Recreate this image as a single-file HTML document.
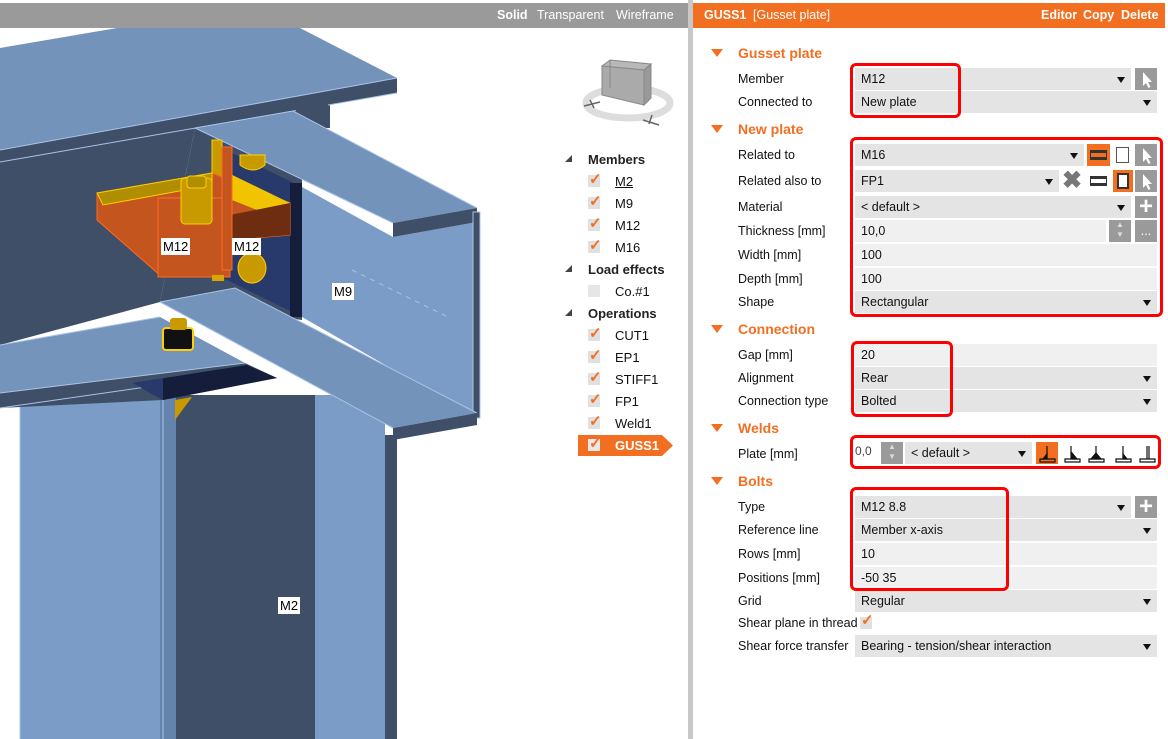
<!DOCTYPE html>
<html><head><meta charset="utf-8"><style>
*{margin:0;padding:0;box-sizing:border-box}
body{width:1168px;height:739px;overflow:hidden;background:#fff;font-family:"Liberation Sans",sans-serif;font-size:12.5px;color:#111;position:relative}
.a{position:absolute}
.lbl{position:absolute;left:738px;font-size:12.5px;line-height:16px}
.sec{position:absolute;left:738px;font-size:14px;font-weight:bold;color:#f26f21;line-height:16px}
.tri{position:absolute;left:711px;width:0;height:0;border-left:6px solid transparent;border-right:6px solid transparent;border-top:8px solid #f26f21}
.f{position:absolute;height:22px;background:#e4e4e4;padding-left:6px;line-height:22px;font-size:12.5px}
.t{background:#f0f0f0}
.dd:after{content:"";position:absolute;right:6px;top:9px;border-left:4px solid transparent;border-right:4px solid transparent;border-top:6px solid #111}
.btn{position:absolute;width:22px;height:22px;background:#9a9a9a}
.red{position:absolute;border:3px solid #f00;border-radius:6px}
.tl{position:absolute;left:615px;font-size:13px;line-height:16px}
.th{position:absolute;left:588px;font-size:13px;font-weight:bold;line-height:16px;color:#222}
.tt{position:absolute;left:565px;width:0;height:0;border-left:7px solid transparent;border-bottom:7px solid #444}
.cb{position:absolute;left:588px;width:12px;height:12px;background:#e0e0e0}
.cb:after{content:"✓";position:absolute;left:1px;top:-5px;color:#f26f21;font-size:15px;font-weight:bold}
.ml{position:absolute;background:#fff;font-size:13px;line-height:17px;padding:0 2px;color:#000}
</style></head><body>

<svg width="0" height="0" style="position:absolute"><defs>
<symbol id="cur" viewBox="0 0 22 22"><path d="M8,4 L8,18 L11,15 L13.5,20 L15.5,19 L13,14 L17,14 Z" fill="#fff"/></symbol>
</defs></svg>

<!-- 3D viewport -->
<svg class="a" style="left:0;top:0" width="688" height="739" viewBox="0 0 688 739">
<rect width="688" height="739" fill="#fff"/>
<!-- dark web behind -->
<polygon points="0,160 330,100 330,128 195,128 160,302 0,345" fill="#3f4f68"/>
<polygon points="195,128 302,175 302,320 160,302" fill="#3f4f68"/>
<!-- top beam -->
<polygon points="0,48 117,28 300,28 397,78 0,150" fill="#7393bb"/>
<polygon points="0,150 397,78 397,93 0,162" fill="#3f4f68"/>
<polyline points="0,150 397,78" stroke="#a9c3e6" stroke-width="1" fill="none"/>
<polyline points="0,162 397,93" stroke="#a9c3e6" stroke-width="1" fill="none"/>
<polygon points="296,100 328,94 328,128 296,128" fill="#3f4f68"/>
<!-- column M2 -->
<rect x="20" y="395" width="365" height="344" fill="#7b9cc7"/>
<rect x="160" y="395" width="16" height="344" fill="#6483ad"/>
<rect x="176" y="395" width="139" height="344" fill="#3f4f68"/>
<rect x="385" y="435" width="12" height="304" fill="#3f4f68"/>
<line x1="20" y1="395" x2="20" y2="739" stroke="#a9c3e6"/>
<line x1="163" y1="400" x2="163" y2="739" stroke="#a9c3e6"/>
<!-- lower beam left -->
<polygon points="0,345 160,317 245,363 0,393" fill="#7594bb"/>
<polyline points="0,345 160,317" stroke="#a9c3e6" fill="none"/>
<polygon points="0,393 245,363 277,378 163,400 0,408" fill="#3f4f68"/>
<polyline points="0,393 245,363" stroke="#a9c3e6" fill="none"/>
<polyline points="0,408 160,385" stroke="#a9c3e6" fill="none"/>
<polygon points="133,383 247,365 277,378 163,400" fill="#141d3a"/>
<polygon points="133,383 163,378 163,400" fill="#283a6b"/>
<polygon points="175,400 192,397 175,420" fill="#c89a00"/>
<!-- navy end plate -->
<polygon points="230,152 302,187 302,317 223,278" fill="#283a6b"/>
<rect x="290" y="183" width="12" height="134" fill="#141d3a"/>
<!-- M9 web -->
<polygon points="302,187 393,237 477,222 477,418 302,317" fill="#7b9cc7"/>
<line x1="352" y1="270" x2="450" y2="318" stroke="#a9c3e6" stroke-dasharray="5,5"/>
<!-- M9 top flange -->
<polygon points="195,128 293,111 477,208 393,223" fill="#7393bb"/>
<polyline points="195,128 293,111 477,208" stroke="#a9c3e6" fill="none"/>
<polyline points="195,128 393,223" stroke="#a9c3e6" fill="none"/>
<polygon points="393,223 477,208 477,222 393,237" fill="#3f4f68"/>
<rect x="473" y="212" width="7" height="206" fill="#3f4f68" stroke="#a9c3e6" stroke-width="1"/>
<!-- M9 lower flange -->
<polygon points="160,302 235,288 477,413 393,428" fill="#7393bb"/>
<polyline points="160,302 235,288 477,413" stroke="#a9c3e6" fill="none"/>
<polyline points="160,302 393,428" stroke="#a9c3e6" fill="none"/>
<polygon points="393,428 477,413 477,425 393,440" fill="#3f4f68"/>
<!-- gusset -->
<rect x="212" y="140" width="10" height="40" fill="#c89a00" stroke="#ffd000"/>
<polygon points="97,193 212,173 290,203 290,235 230,240 162,277 97,220" fill="#c4551f" stroke="#ff6a20"/>
<polygon points="97,193 212,173 212,185 103,205" fill="#b08e00" stroke="#ffd000"/>
<polygon points="222,170 290,203 282,220 232,200" fill="#f2c400"/>
<polygon points="230,215 290,203 290,235 230,240" fill="#6e2d10"/>
<rect x="158" y="198" width="72" height="79" fill="#c4551f" stroke="#ff6a20"/>
<rect x="222" y="147" width="10" height="123" fill="#c4551f" stroke="#ff6a20"/>
<rect x="212" y="275" width="12" height="6" fill="#d9a800"/>
<!-- bolts -->
<rect x="181" y="178" width="31" height="46" rx="4" fill="#c89a00" stroke="#ffd000"/>
<rect x="187" y="176" width="19" height="12" rx="3" fill="#b08e00" stroke="#ffd000"/>
<ellipse cx="252" cy="268" rx="14" ry="15" fill="#c89a00" stroke="#ffd000"/>
<path d="M240,155 h25 v10 q-12,10 -25,0z" fill="#c89a00" stroke="#ffd000"/>
<rect x="163" y="328" width="30" height="22" rx="3" fill="#111" stroke="#ffd000" stroke-width="2"/>
<rect x="170" y="318" width="17" height="12" rx="3" fill="#c89a00"/>
</svg>

<!-- viewport labels -->
<div class="ml" style="left:161px;top:238px">M12</div>
<div class="ml" style="left:232px;top:238px">M12</div>
<div class="ml" style="left:332px;top:283px">M9</div>
<div class="ml" style="left:278px;top:597px">M2</div>

<!-- top toolbar -->
<div class="a" style="left:0;top:3px;width:688px;height:25px;background:#9a9a9a"></div>
<div class="a" style="left:497px;top:8px;color:#fff;font-size:12.5px;font-weight:bold">Solid</div>
<div class="a" style="left:537px;top:8px;color:#fff;font-size:12.5px">Transparent</div>
<div class="a" style="left:616px;top:8px;color:#fff;font-size:12.5px">Wireframe</div>

<!-- nav cube -->
<svg class="a" style="left:578px;top:58px" width="100" height="70">
<ellipse cx="50" cy="45" rx="42" ry="15" fill="none" stroke="#ddd" stroke-width="7"/>
<polygon points="24,8 32,2 73,6 66,12" fill="#b8b8b8" stroke="#888"/>
<polygon points="24,8 66,12 66,47 24,37" fill="#aaa" stroke="#888"/>
<polygon points="66,12 73,6 73,40 66,47" fill="#999" stroke="#888"/>
<line x1="32" y1="2" x2="32" y2="30" stroke="#888"/>
<path d="M6,48 l16,-4 M12,42 l4,8 M65,62 l16,5 M74,57 l-3,9" stroke="#666" stroke-width="1.5"/>
</svg>

<!-- tree -->
<div class="tt" style="top:155px"></div><div class="th" style="top:152px">Members</div>
<div class="cb" style="top:175px"></div><div class="tl" style="top:174px;text-decoration:underline">M2</div>
<div class="cb" style="top:197px"></div><div class="tl" style="top:196px">M9</div>
<div class="cb" style="top:219px"></div><div class="tl" style="top:218px">M12</div>
<div class="cb" style="top:241px"></div><div class="tl" style="top:240px">M16</div>
<div class="tt" style="top:265px"></div><div class="th" style="top:262px">Load effects</div>
<div class="a" style="left:588px;top:285px;width:12px;height:12px;background:#e6e6e6"></div><div class="tl" style="top:284px">Co.#1</div>
<div class="tt" style="top:309px"></div><div class="th" style="top:306px">Operations</div>
<div class="cb" style="top:329px"></div><div class="tl" style="top:328px">CUT1</div>
<div class="cb" style="top:351px"></div><div class="tl" style="top:350px">EP1</div>
<div class="cb" style="top:373px"></div><div class="tl" style="top:372px">STIFF1</div>
<div class="cb" style="top:395px"></div><div class="tl" style="top:394px">FP1</div>
<div class="cb" style="top:417px"></div><div class="tl" style="top:416px">Weld1</div>
<svg class="a" style="left:578px;top:435px" width="96" height="21"><polygon points="0,0 84,0 95,10.5 84,21 0,21" fill="#f26f21"/></svg>
<div class="a" style="left:588px;top:439px;width:12px;height:12px;background:#e8e8e8"></div>
<div class="a" style="left:589px;top:434px;color:#f26f21;font-size:15px;font-weight:bold">✓</div>
<div class="tl" style="top:438px;color:#fff;font-weight:bold">GUSS1</div>

<!-- divider -->
<div class="a" style="left:688px;top:0;width:5px;height:739px;background:#c8c8c8"></div>

<!-- right header -->
<div class="a" style="left:693px;top:3px;width:472px;height:25px;background:#f26f21"></div>
<div class="a" style="left:704px;top:8px;color:#fff;font-weight:bold;font-size:12.5px">GUSS1</div>
<div class="a" style="left:753px;top:8px;color:#fff;font-size:12.5px">[Gusset plate]</div>
<div class="a" style="left:1041px;top:8px;color:#fff;font-weight:bold;font-size:12.5px">Editor</div>
<div class="a" style="left:1083px;top:8px;color:#fff;font-weight:bold;font-size:12.5px">Copy</div>
<div class="a" style="left:1121px;top:8px;color:#fff;font-weight:bold;font-size:12.5px">Delete</div>

<!-- sections -->
<div class="tri" style="top:49px"></div><div class="sec" style="top:45px">Gusset plate</div>
<div class="tri" style="top:125px"></div><div class="sec" style="top:121px">New plate</div>
<div class="tri" style="top:325px"></div><div class="sec" style="top:321px">Connection</div>
<div class="tri" style="top:424px"></div><div class="sec" style="top:420px">Welds</div>
<div class="tri" style="top:477px"></div><div class="sec" style="top:473px">Bolts</div>

<!-- labels -->
<div class="lbl" style="top:71px">Member</div>
<div class="lbl" style="top:94px">Connected to</div>
<div class="lbl" style="top:147px">Related to</div>
<div class="lbl" style="top:173px">Related also to</div>
<div class="lbl" style="top:199px">Material</div>
<div class="lbl" style="top:223px">Thickness [mm]</div>
<div class="lbl" style="top:247px">Width [mm]</div>
<div class="lbl" style="top:271px">Depth [mm]</div>
<div class="lbl" style="top:294px">Shape</div>
<div class="lbl" style="top:347px">Gap [mm]</div>
<div class="lbl" style="top:370px">Alignment</div>
<div class="lbl" style="top:393px">Connection type</div>
<div class="lbl" style="top:446px">Plate [mm]</div>
<div class="lbl" style="top:499px">Type</div>
<div class="lbl" style="top:522px">Reference line</div>
<div class="lbl" style="top:546px">Rows [mm]</div>
<div class="lbl" style="top:570px">Positions [mm]</div>
<div class="lbl" style="top:593px">Grid</div>
<div class="lbl" style="top:615px">Shear plane in thread</div>
<div class="lbl" style="top:638px">Shear force transfer</div>

<!-- fields -->
<div class="f dd" style="left:855px;top:68px;width:276px">M12</div>
<svg class="btn" style="left:1135px;top:68px"><use href="#cur"/></svg>
<div class="f dd" style="left:855px;top:91px;width:302px">New plate</div>

<div class="f dd" style="left:855px;top:144px;width:229px">M16</div>
<div class="a" style="left:1087px;top:144px;width:23px;height:22px;background:#f26f21"></div>
<div class="a" style="left:1090px;top:150px;width:17px;height:10px;border-top:3px solid #333;border-bottom:3px solid #333;border-left:1px solid #333;border-right:1px solid #333"></div>
<div class="a" style="left:1116px;top:147px;width:13px;height:16px;border:1px solid #555"></div>
<svg class="btn" style="left:1135px;top:144px"><use href="#cur"/></svg>
<div class="f dd" style="left:855px;top:170px;width:204px">FP1</div>
<div class="a" style="left:1062px;top:166px;font-size:24px;font-weight:bold;color:#777">✖</div>
<div class="a" style="left:1090px;top:176px;width:17px;height:10px;border-top:3px solid #333;border-bottom:3px solid #333;border-left:1px solid #333;border-right:1px solid #333"></div>
<div class="a" style="left:1113px;top:170px;width:20px;height:22px;background:#f26f21"></div>
<div class="a" style="left:1117px;top:173px;width:12px;height:16px;border:2px solid #333;background:#fff"></div>
<svg class="btn" style="left:1135px;top:170px"><use href="#cur"/></svg>
<div class="f dd" style="left:855px;top:196px;width:276px">&lt; default &gt;</div>
<div class="btn" style="left:1135px;top:196px;color:#fff;font-size:24px;line-height:22px;text-align:center;font-weight:bold">+</div>
<div class="f t" style="left:855px;top:220px;width:251px">10,0</div>
<div class="btn" style="left:1109px;top:220px;color:#ddd;font-size:8px;text-align:center;line-height:10px">▲<br>▼</div>
<div class="btn" style="left:1135px;top:220px;color:#fff;text-align:center;line-height:22px">...</div>
<div class="f t" style="left:855px;top:244px;width:302px">100</div>
<div class="f t" style="left:855px;top:268px;width:302px">100</div>
<div class="f dd" style="left:855px;top:291px;width:302px">Rectangular</div>

<div class="f t" style="left:855px;top:344px;width:302px">20</div>
<div class="f dd" style="left:855px;top:367px;width:302px">Rear</div>
<div class="f dd" style="left:855px;top:390px;width:302px">Bolted</div>

<div class="a" style="left:855px;top:444px;font-size:12px;color:#444">0,0</div>
<div class="btn" style="left:881px;top:442px;color:#ddd;font-size:8px;text-align:center;line-height:10px">▲<br>▼</div>
<div class="f dd" style="left:905px;top:442px;width:127px">&lt; default &gt;</div>
<div class="a" style="left:1036px;top:442px;width:22px;height:22px;background:#f26f21"></div>
<svg class="a" style="left:1036px;top:442px" width="122" height="22">
<g stroke="#111" fill="none" stroke-width="1.2">
<path d="M4,17h15v3H4z M11,4v13"/><path d="M7,17l4,-5v5z" fill="#111"/>
<path d="M29,17h15v3H29z M35,4v13"/><path d="M36,11l5,6h-5z" fill="#111"/>
<path d="M53,17h15v3H53z M60,4v13"/><path d="M55,17l5,-6l5,6z" fill="#111"/>
<path d="M80,17h15v3H80z M87,4v13"/><path d="M87,12l4,5h-4z" fill="#111"/>
<path d="M104,17h15v3h-15z M111,4v13 M113,4v13"/>
</g></svg>

<div class="f dd" style="left:855px;top:496px;width:276px">M12 8.8</div>
<div class="btn" style="left:1135px;top:496px;color:#fff;font-size:24px;line-height:22px;text-align:center;font-weight:bold">+</div>
<div class="f dd" style="left:855px;top:519px;width:302px">Member x-axis</div>
<div class="f t" style="left:855px;top:543px;width:302px">10</div>
<div class="f t" style="left:855px;top:567px;width:302px">-50 35</div>
<div class="f dd" style="left:855px;top:590px;width:302px">Regular</div>
<div class="a" style="left:860px;top:617px;width:12px;height:12px;background:#e0e0e0"></div>
<div class="a" style="left:861px;top:611px;color:#f26f21;font-size:15px;font-weight:bold">✓</div>
<div class="f dd" style="left:855px;top:635px;width:302px">Bearing - tension/shear interaction</div>

<!-- red boxes -->
<div class="red" style="left:850px;top:63px;width:111px;height:55px"></div>
<div class="red" style="left:850px;top:137px;width:313px;height:180px"></div>
<div class="red" style="left:851px;top:341px;width:102px;height:76px"></div>
<div class="red" style="left:850px;top:435px;width:311px;height:34px"></div>
<div class="red" style="left:850px;top:487px;width:159px;height:104px"></div>
</body></html>
